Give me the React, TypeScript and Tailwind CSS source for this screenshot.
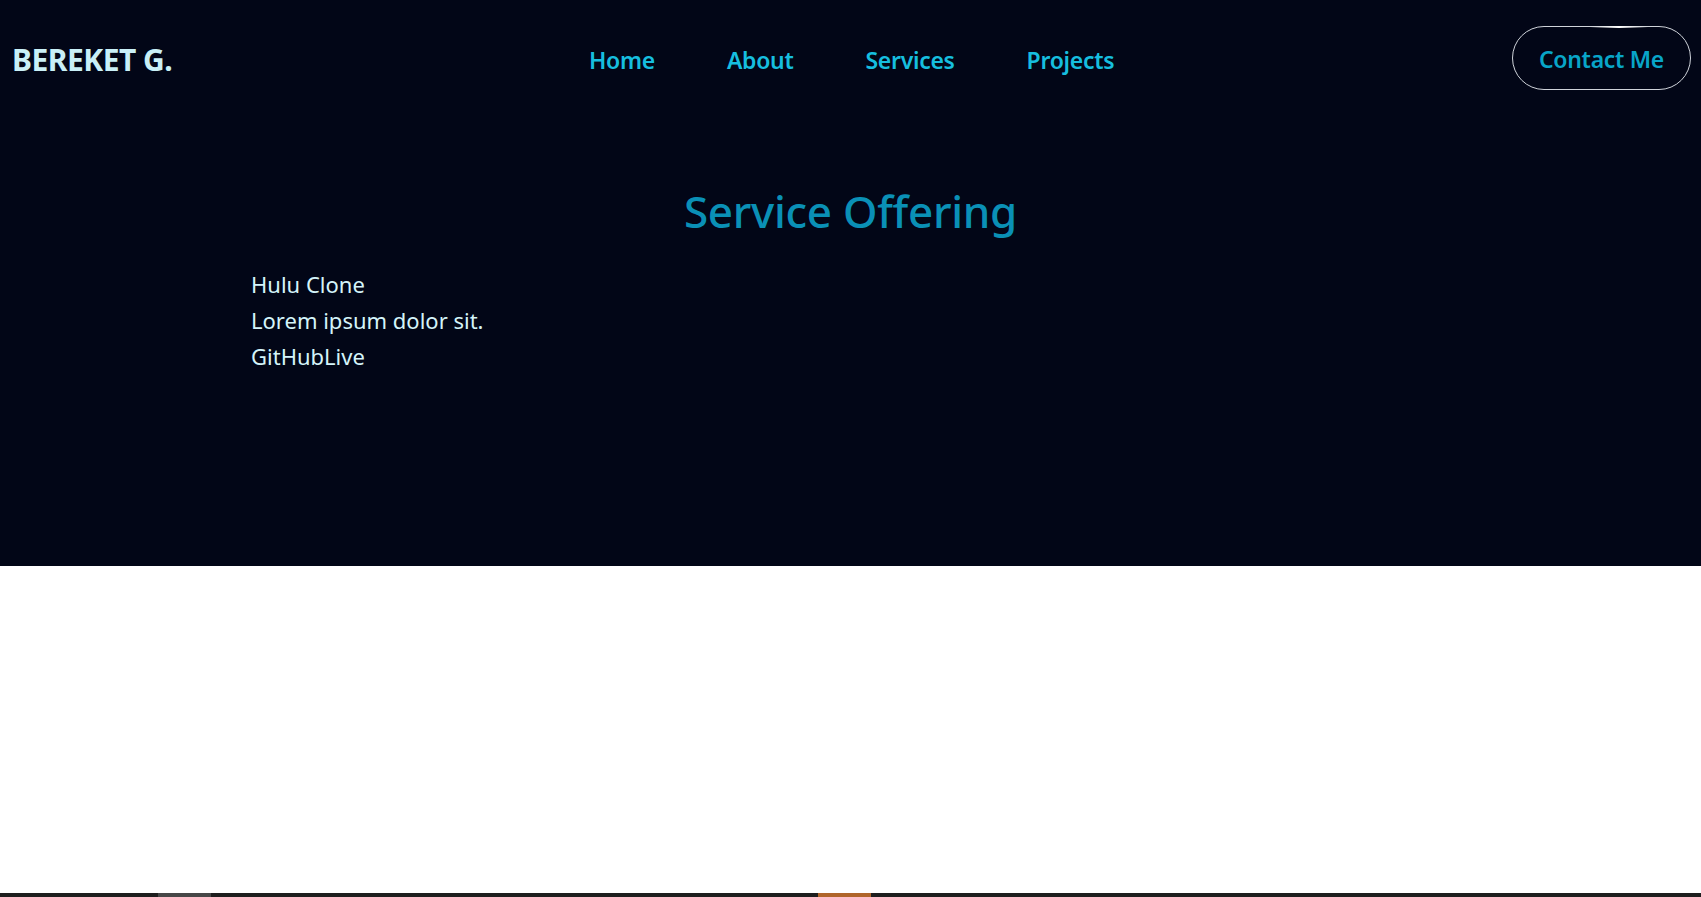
import React from "react";

const font = { fontFamily: '"Noto Sans", "Open Sans", sans-serif' };

export default function App() {
  const links = ["Home", "About", "Services", "Projects"];
  return (
    <div className="min-h-[897px] w-full flex flex-col bg-white" style={font}>
      <div className="bg-[#020617] h-[566px] flex flex-col">
        <header className="flex items-center h-[116px] pl-[12px] pr-[10px]">
          <div className="w-[577px] pt-[4px] text-[30px] font-bold text-[#c9f0f7] tracking-[-0.5px] leading-none">
            BEREKET G.
          </div>
          <nav className="flex items-center gap-[72px] pt-[4px]">
            {links.map((l) => (
              <a key={l} className="text-[23px] font-semibold text-[#16bedf] leading-none tracking-[-0.3px]">
                {l}
              </a>
            ))}
          </nav>
          <div className="ml-auto relative">
            <button className="w-[179px] h-[64px] pt-[3px] rounded-full border border-[#cfd3da] text-[23px] font-semibold text-[#08a5c8] tracking-[-0.3px]">
              Contact Me
            </button>
            <div className="absolute top-0 left-[78px] w-[58px] h-[2px] bg-gradient-to-r from-transparent via-white to-transparent" />
          </div>
        </header>
        <h1 className="mt-[67px] text-center text-[44px] font-medium text-[#0a90b6] leading-[56px] tracking-[-0.3px]">
          Service Offering
        </h1>
        <ul className="mt-[27px] pl-[251px] text-[22px] text-[#d4f4fa] leading-[36px]">
          <li>Hulu Clone</li>
          <li>Lorem ipsum dolor sit.</li>
          <li>GitHubLive</li>
        </ul>
      </div>
      <div className="flex-1 bg-white" />
      <div className="h-[4px] bg-[#1e1e1e] flex">
        <div className="ml-[158px] w-[53px] bg-[#474747]" />
        <div className="ml-[607px] w-[53px] bg-[#b0652a]" />
      </div>
    </div>
  );
}
